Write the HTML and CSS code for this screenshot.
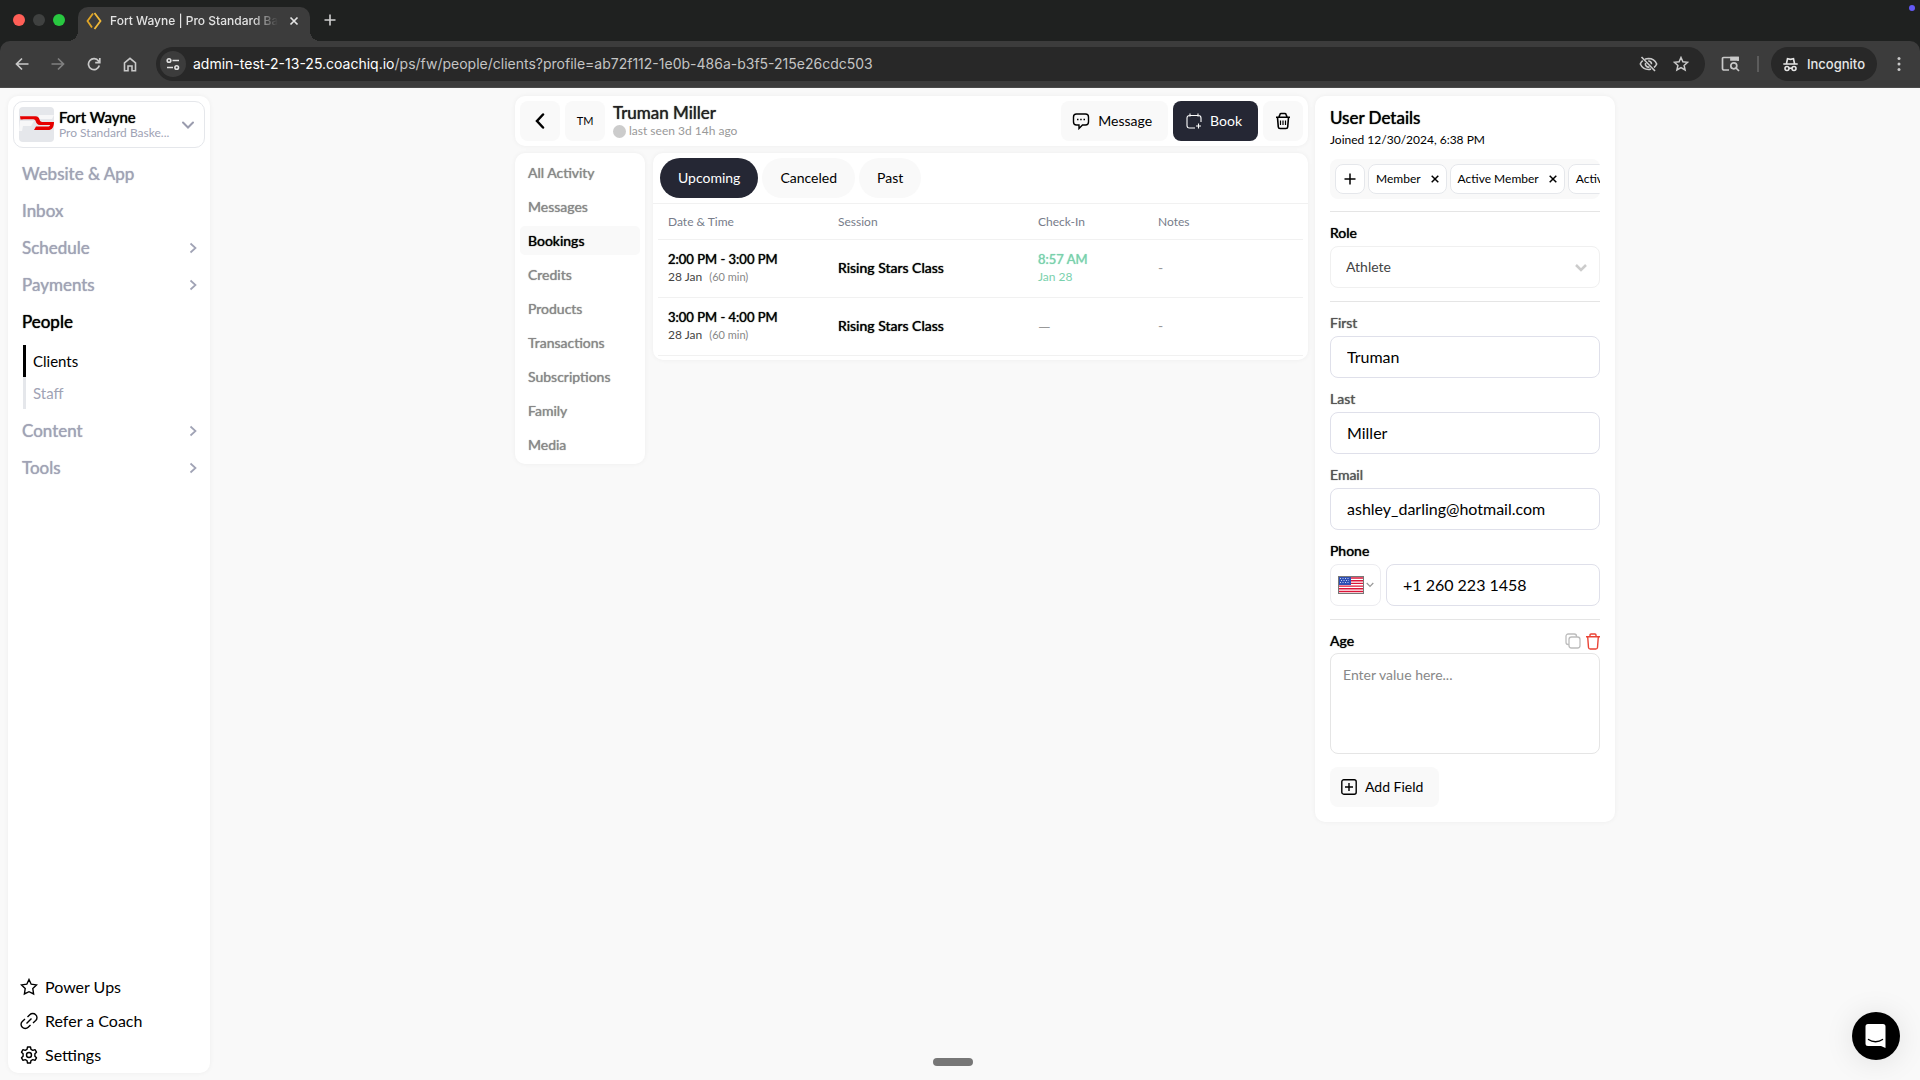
FILE: index.html
```html
<!DOCTYPE html>
<html lang="en">
<head>
<meta charset="utf-8">
<title>Fort Wayne | Pro Standard Basketball</title>
<link rel="stylesheet" href="styles.css">
</head>
<body>
<div class="browser">
  <div class="tabstrip">
    <div class="lights"><span class="light red"></span><span class="light off"></span><span class="light green"></span></div>
    <div class="tab">
      <svg width="16" height="18" viewBox="0 0 16 18" fill="none" stroke-width="1.800"><path d="M7 1.500 1.500 9 6 15.500" stroke="#e0a526"/><path d="M8.500 1 14.500 9 8.500 17" stroke="#f0b93a"/></svg>
      <span class="tab-title">Fort Wayne | Pro Standard Ba</span>
      <button class="plain" aria-label="Close tab"><svg width="10" height="10" viewBox="0 0 10 10" stroke="#e3e3e3" stroke-width="1.700"><path d="M1.500 1.500l7 7M8.500 1.500l-7 7"/></svg></button>
    </div>
    <button class="plain new-tab" aria-label="New tab"><svg width="12" height="12" viewBox="0 0 12 12" stroke="#d0d0d0" stroke-width="1.600"><path d="M6 .5v11M.5 6h11"/></svg></button>
    <span class="rec-dot"></span>
  </div>
  <div class="toolbar">
    <button class="plain tool" aria-label="Back"><svg width="14" height="14" viewBox="0 0 14 14" fill="none" stroke="#c9c9c9" stroke-width="1.700"><path d="M13.500 7H1.500M7 1.500 1.500 7 7 12.500"/></svg></button>
    <button class="plain tool" aria-label="Forward"><svg width="14" height="14" viewBox="0 0 14 14" fill="none" stroke="#808080" stroke-width="1.700"><path d="M.5 7h12M7 1.500 12.500 7 7 12.500"/></svg></button>
    <button class="plain tool" aria-label="Reload"><svg width="14" height="14" viewBox="0 0 14 14" fill="none" stroke="#c9c9c9" stroke-width="1.700"><path d="M12.300 8.500A5.500 5.500 0 1 1 11.500 4L12.700 5.500M12.800 1v4.700H8.200"/></svg></button>
    <button class="plain tool" aria-label="Home"><svg width="14" height="15" viewBox="0 0 14 15" fill="none" stroke="#c9c9c9" stroke-width="1.600"><path d="M1.500 5.800 7 1.300l5.500 4.500v8H9V9H5v4.800H1.500z"/></svg></button>
    <div class="omnibox">
      <span class="site-info"><svg width="14" height="14" viewBox="0 0 14 14" fill="none" stroke="#e0e0e0" stroke-width="1.600"><circle cx="3" cy="3.500" r="1.800"/><path d="M6.500 3.500H13M1 10.500h6"/><circle cx="10.700" cy="10.500" r="1.800"/></svg></span>
      <span class="url"><b>admin-test-2-13-25.coachiq.io</b>/ps/fw/people/clients?profile=ab72f112-1e0b-486a-b3f5-215e26cdc503</span>
      <button class="plain tool small" aria-label="Tracking protection"><svg width="19" height="16" viewBox="0 0 19 16" fill="none" stroke="#c9c9c9" stroke-width="1.600"><path d="M6 3.300A9 9 0 0 1 9.500 2.500c4 0 6.800 2.400 8.200 5.500a9 9 0 0 1-2.700 3.500M12 13a8 8 0 0 1-2.500.5C5.500 13.500 2.700 11 1.300 8A9 9 0 0 1 3.700 4.700"/><path d="M9.200 5a3 3 0 0 1 3.300 3.200M6.600 7a3 3 0 0 0 3.800 3.900M2.500 1l13.500 14"/></svg></button>
      <button class="plain tool small" aria-label="Bookmark"><svg width="16" height="16" viewBox="0 0 16 16" fill="none" stroke="#c9c9c9" stroke-width="1.500"><path d="m8 1.500 1.900 4.300 4.700.5-3.500 3.100 1 4.600L8 11.600 3.900 14l1-4.600L1.400 6.300l4.700-.5z"/></svg></button>
    </div>
    <button class="plain tool panel" aria-label="Side panel"><svg width="19" height="16" viewBox="0 0 19 16" fill="none" stroke="#c9c9c9" stroke-width="1.700"><path d="M8 14H3a1.500 1.500 0 0 1-1.500-1.500V2.500A1 1 0 0 1 2.500 1.500H17V5"/><path d="M10 1.500h7V4h-7z" fill="#c9c9c9"/><circle cx="12.800" cy="9.800" r="3"/><path d="M15 12l3 3"/></svg></button>
    <span class="divider"></span>
    <button class="incognito"><svg width="15" height="15" viewBox="0 0 15 15" fill="none" stroke="#e6e6e6" stroke-width="1.600"><path d="M.3 7h14.400M3.500 6.500 4.500 1.800 7.500 2.400l3-.6 1 4.700"/><circle cx="4" cy="11.500" r="2"/><circle cx="11" cy="11.500" r="2"/><path d="M6 11.200h3"/></svg>Incognito</button>
    <button class="plain tool more" aria-label="Menu"><svg width="4" height="16" viewBox="0 0 4 16" fill="#c9c9c9"><circle cx="2" cy="2.500" r="1.500"/><circle cx="2" cy="8" r="1.500"/><circle cx="2" cy="13.500" r="1.500"/></svg></button>
  </div>
</div>

<div class="app">
  <aside class="sidebar card">
    <button class="org">
      <svg class="org-logo" width="35" height="35" viewBox="0 0 35 35"><rect width="35" height="35" rx="4" fill="#e5e7eb"/><path d="M1 14h14l-3 5H4l-1 5H0zM20 8h15l-2 4H19z" fill="#f7f7f8"/><path d="M1 9.200h15.500c2.500 0 3.500 1.800 4 3.200.5 1.500 1 2.500 3 2.500h11.500c-.1 5.500-2 8-6 8H15l2-3.500h11.500c2 0 2.500-.6 2.700-1.500H21c-2.700 0-3.700-2-4.200-3.500-.4-1.200-1-2.200-2.500-2.200H4.500L3 12.500H1.500z" fill="#e60000"/></svg>
      <span class="org-text"><span class="org-name heavy">Fort Wayne</span><span class="org-sub">Pro Standard Baske...</span></span>
      <svg width="14" height="14" viewBox="0 0 14 14" fill="none" stroke="#9a9cae" stroke-width="2" stroke-linecap="round"><path d="M2 4.500l5 5 5-5"/></svg>
    </button>
    <nav class="menu">
      <a href="#" class="heavy">Website &amp; App</a>
      <a href="#" class="heavy">Inbox</a>
      <a href="#" class="heavy">Schedule<svg width="8" height="12" viewBox="0 0 8 12" class="chev"><path d="M1.500 1.500 6.500 6l-5 4.500"/></svg></a>
      <a href="#" class="heavy">Payments<svg width="8" height="12" viewBox="0 0 8 12" class="chev"><path d="M1.500 1.500 6.500 6l-5 4.500"/></svg></a>
      <a href="#" class="heavy current">People</a>
      <div class="submenu"><a href="#" class="on">Clients</a><a href="#">Staff</a></div>
      <a href="#" class="heavy">Content<svg width="8" height="12" viewBox="0 0 8 12" class="chev"><path d="M1.500 1.500 6.500 6l-5 4.500"/></svg></a>
      <a href="#" class="heavy">Tools<svg width="8" height="12" viewBox="0 0 8 12" class="chev"><path d="M1.500 1.500 6.500 6l-5 4.500"/></svg></a>
    </nav>
    <nav class="foot">
      <a href="#"><svg width="18" height="18" viewBox="0 0 18 18" class="line"><path d="m9 1.500 2.200 4.700 5.300.7-3.700 3.700.8 5.400L9 13.700 4.400 16l.8-5.400L1.500 6.900l5.300-.7z"/></svg>Power Ups</a>
      <a href="#"><svg width="18" height="18" viewBox="0 0 18 18" class="line"><path d="M6.500 11.500l5-5M7.500 5l2.300-2.300a4.100 4.100 0 0 1 5.900 0 4.100 4.100 0 0 1 0 5.900L13 11M10.500 13l-2.300 2.300a4.100 4.100 0 0 1-5.900 0 4.100 4.100 0 0 1 0-5.900L5 7"/></svg>Refer a Coach</a>
      <a href="#"><svg width="18" height="18" viewBox="0 0 18 18" class="line"><circle cx="9" cy="9" r="2.500"/><path d="M7.500 1h3l.5 2.300 1.800 1 2.200-.7 1.500 2.600-1.600 1.600v2.400l1.600 1.600-1.500 2.600-2.200-.7-1.800 1-.5 2.300h-3L7 14.700l-1.800-1-2.200.7-1.500-2.600 1.600-1.600V7.800L1.500 6.200 3 3.600l2.200.7 1.800-1z" stroke-linejoin="round"/></svg>Settings</a>
    </nav>
  </aside>

  <main class="main">
    <div class="profile">
      <div class="left">
        <header class="card head">
          <button class="soft square" aria-label="Back"><svg width="12" height="16" viewBox="0 0 12 16" fill="none" stroke="#000" stroke-width="2.500" stroke-linecap="round"><path d="M9 1.500 3 8l6 6.500"/></svg></button>
          <span class="soft square initials">TM</span>
          <div class="who"><h1 class="heavy">Truman Miller</h1><p><span class="status"></span>last seen 3d 14h ago</p></div>
          <button class="soft action"><svg width="18" height="18" viewBox="0 0 18 18" class="line"><path d="M4.500 2h9A3 3 0 0 1 16.500 5v5a3 3 0 0 1-3 3h-3L7 16.500V13H4.500a3 3 0 0 1-3-3V5a3 3 0 0 1 3-3z"/><path d="M5 7.500h1.500M8.200 7.500h1.500M11.500 7.500H13" stroke-width="1.600"/></svg>Message</button>
          <button class="soft action dark"><svg width="16" height="16" viewBox="0 0 16 16" class="line thin"><path d="M9 15H3.500A2.500 2.500 0 0 1 1 12.500V5a2.500 2.500 0 0 1 2.500-2.500h9A2.500 2.500 0 0 1 15 5v4M4 .5v3M12 .5v3M12.500 10.500v5M10 13h5"/></svg>Book</button>
          <button class="soft square" aria-label="Delete"><svg width="16" height="18" viewBox="0 0 16 18" fill="none" stroke="#000" stroke-width="1.600"><path d="M1 5.200h14M4 5 5 2.300c.2-.6.6-.8 1.200-.8h3.600c.6 0 1 .2 1.200.8L12 5M2.500 5.500l.8 9.500c.1 1 .7 1.500 1.700 1.500h6c1 0 1.600-.5 1.700-1.500l.8-9.500"/><path d="M5.500 8.500v4.500M8 8.500v4.500M10.500 8.500v4.500" stroke-width="1.200"/></svg></button>
        </header>
        <div class="columns">
          <nav class="card tabs">
            <a href="#" class="heavy">All Activity</a>
            <a href="#" class="heavy">Messages</a>
            <a href="#" class="heavy active">Bookings</a>
            <a href="#" class="heavy">Credits</a>
            <a href="#" class="heavy">Products</a>
            <a href="#" class="heavy">Transactions</a>
            <a href="#" class="heavy">Subscriptions</a>
            <a href="#" class="heavy">Family</a>
            <a href="#" class="heavy">Media</a>
          </nav>
          <section class="card bookings">
            <div class="filters"><button class="pill selected">Upcoming</button><button class="pill">Canceled</button><button class="pill">Past</button></div>
            <table>
              <colgroup><col class="c-date"><col class="c-session"><col class="c-check"><col></colgroup>
              <thead><tr><th>Date &amp; Time</th><th>Session</th><th>Check-In</th><th>Notes</th></tr></thead>
              <tbody>
                <tr><td><div class="time heavy">2:00 PM - 3:00 PM</div><div class="sub">28 Jan <small>(60 min)</small></div></td><td><span class="heavy">Rising Stars Class</span></td><td class="checked-in"><div class="time heavy">8:57 AM</div><div class="sub">Jan 28</div></td><td class="muted">-</td></tr>
                <tr><td><div class="time heavy">3:00 PM - 4:00 PM</div><div class="sub">28 Jan <small>(60 min)</small></div></td><td><span class="heavy">Rising Stars Class</span></td><td class="muted dash">—</td><td class="muted">-</td></tr>
              </tbody>
            </table>
          </section>
        </div>
      </div>

      <aside class="card details">
        <h2 class="heavy">User Details</h2>
        <p class="joined">Joined 12/30/2024, 6:38 PM</p>
        <div class="chips">
          <button class="chip add" aria-label="Add tag"><svg width="12" height="12" viewBox="0 0 12 12" stroke="#000" stroke-width="1.500"><path d="M6 .5v11M.5 6h11"/></svg></button>
          <button class="chip">Member<svg width="8" height="8" viewBox="0 0 8 8" class="x"><path d="M.7.7l6.600 6.600M7.300.7.7 7.300"/></svg></button>
          <button class="chip">Active Member<svg width="8" height="8" viewBox="0 0 8 8" class="x"><path d="M.7.7l6.600 6.600M7.300.7.7 7.300"/></svg></button>
          <button class="chip">Activ</button>
        </div>
        <hr>
        <label class="heavy" for="role">Role</label>
        <div class="select"><select id="role"><option>Athlete</option></select><svg width="14" height="10" viewBox="0 0 14 10" fill="none" stroke="#ccc" stroke-width="2.500"><path d="M2 2l5 5 5-5"/></svg></div>
        <hr>
        <label class="heavy grey" for="first">First</label>
        <input id="first" type="text" value="Truman">
        <label class="heavy grey next" for="last">Last</label>
        <input id="last" type="text" value="Miller">
        <label class="heavy grey next" for="email">Email</label>
        <input id="email" type="email" value="ashley_darling@hotmail.com">
        <label class="heavy next" for="phone">Phone</label>
        <div class="phone">
          <button class="country" aria-label="Country: United States"><svg width="26" height="18" viewBox="0 0 26 18"><rect width="26" height="18" fill="#fff"/><path d="M0 2h26M0 4.700h26M0 7.400h26M0 10.100h26M0 12.800h26M0 15.500h26" stroke="#dc1438" stroke-width="1.400"/><rect width="13" height="9" fill="#2f50b5"/><path d="M2 2.500h10M3 4.500h8M2 6.500h10" stroke="#c5d0f0" stroke-dasharray="1 1.500"/><rect x=".5" y=".5" width="25" height="17" fill="none" stroke="#777"/></svg><svg width="8" height="6" viewBox="0 0 8 6" fill="none" stroke="#999" stroke-width="1.200"><path d="M.7 1 4 4.500 7.300 1"/></svg></button>
          <input id="phone" type="tel" value="+1 260 223 1458">
        </div>
        <hr>
        <div class="field-head">
          <label class="heavy" for="age">Age</label>
          <button class="plain" aria-label="Duplicate field"><svg width="16" height="16" viewBox="0 0 16 16" fill="none" stroke="#bdbdbd" stroke-width="1.300"><rect x="4" y="4" width="11" height="11" rx="2.500"/><path d="M4 11.500H3.200A2.200 2.200 0 0 1 1 9.300V3.200A2.200 2.200 0 0 1 3.200 1h6.100a2.200 2.200 0 0 1 2.200 2.200V4"/></svg></button>
          <button class="plain" aria-label="Delete field"><svg width="14" height="17" viewBox="0 0 14 17" fill="none" stroke="#ea4335" stroke-width="1.400"><path d="M0 3.700h14M4 3.500V2c0-.7.400-1 1-1h4c.6 0 1 .3 1 1v1.500M1.700 4l.8 10.500c.1 1 .7 1.500 1.700 1.500h5.600c1 0 1.600-.5 1.700-1.500L12.300 4"/></svg></button>
        </div>
        <textarea id="age" placeholder="Enter value here..."></textarea>
        <button class="soft action add-field"><svg width="16" height="16" viewBox="0 0 16 16" class="line"><rect x=".8" y=".8" width="14.400" height="14.400" rx="2"/><path d="M8 4v8M4 8h8"/></svg>Add Field</button>
      </aside>
    </div>
  </main>
</div>
<span class="grabber"></span>
<button class="chat" aria-label="Open chat"><svg width="24" height="26" viewBox="0 0 24 26"><path d="M4 1h15a2.500 2.500 0 0 1 2.500 2.500V25l-4.500-2H4a2.500 2.500 0 0 1-2.500-2.500v-17A2.500 2.500 0 0 1 4 1z" fill="#fff"/><path d="M4.500 16.500c4 3 10 3 14 0" fill="none" stroke="#000" stroke-width="1.400" stroke-linecap="round"/></svg></button>
</body>
</html>
```
FILE: styles.css
```css
* { box-sizing: border-box; }
body {
  margin: 0;
  min-height: 100vh;
  display: flex;
  flex-direction: column;
  background: #f9f9f9;
  color: #000;
  font: 14px/20px Lato, sans-serif;
}
a { color: inherit; text-decoration: none; }
button, input, select, textarea { font: inherit; color: inherit; margin: 0; }
button { border: 0; cursor: pointer; white-space: nowrap; }
h1, h2, p { margin: 0; font-weight: 400; }
svg { display: block; flex: none; }
.heavy { text-shadow: 0 0 1px currentColor; }
.plain { padding: 0; background: none; display: flex; align-items: center; justify-content: center; }
.line { fill: none; stroke: currentColor; stroke-width: 1.400; }
.thin { stroke-width: 1.100; }

/* browser window */
.browser { background: #1f2120; font-family: Inter, sans-serif; color: #e3e3e3; }
.tabstrip { display: flex; align-items: flex-end; height: 41px; position: relative; }
.lights { display: flex; gap: 8px; padding: 0 13px 15px 13px; }
.light { flex: none; width: 12px; height: 12px; border-radius: 50%; }
.light.red { background: #ff5f57; }
.light.off { background: #3f4140; }
.light.green { background: #28c840; }
.tab {
  width: 232px;
  height: 34px;
  padding: 0 8px 7px 8px;
  display: flex;
  align-items: center;
  gap: 8px;
  background: #3c3c3c;
  border-radius: 10px 10px 0 0;
  position: relative;
}
.tab::before, .tab::after { content: ""; position: absolute; bottom: 0; width: 10px; height: 10px; }
.tab::before { right: 100%; background: radial-gradient(circle at 0 0, transparent 10px, #3c3c3c 10px); }
.tab::after { left: 100%; background: radial-gradient(circle at 100% 0, transparent 10px, #3c3c3c 10px); }
.tab-title {
  flex: 1;
  min-width: 0;
  white-space: nowrap;
  font-size: 12px;
  font-weight: 500;
  line-height: 18px;
  -webkit-mask-image: linear-gradient(90deg, #000 85%, transparent);
  mask-image: linear-gradient(90deg, #000 85%, transparent);
}
.tab button { width: 16px; height: 16px; }
.new-tab { width: 12px; height: 12px; margin: 0 0 15px 14px; }
.rec-dot { position: absolute; top: 5px; right: 5px; width: 6px; height: 6px; border-radius: 50%; background: #6459f5; }
.toolbar {
  display: flex;
  align-items: center;
  height: 47px;
  padding: 0 3px 0 4px;
  background: #3c3c3c;
  border-bottom: 1px solid #4a4a4a;
  border-radius: 10px 10px 0 0;
}
.tool { width: 36px; height: 34px; }
.omnibox { flex: 1; display: flex; align-items: center; height: 34px; margin-left: 8px; padding: 0 8px 0 4px; background: #282828; border-radius: 17px; }
.site-info { width: 26px; height: 26px; border-radius: 50%; background: #3c3c3c; display: grid; place-items: center; }
.url { flex: 1; min-width: 0; padding-left: 7px; overflow: hidden; white-space: nowrap; font-size: 14px; color: #c4c4c4; }
.url b { font-weight: 400; color: #fff; }
.small { width: 32px; }
.panel { margin-left: 8px; }
.divider { width: 2px; height: 16px; margin: 0 12px 0 8px; background: #5c5c5c; }
.incognito { display: flex; align-items: center; gap: 9px; height: 34px; padding: 0 12px; border-radius: 17px; background: #282828; color: #e6e6e6; font-size: 13px; font-weight: 500; }
.more { margin-left: 4px; }

/* app shell */
.app { flex: 1; display: flex; padding: 8px 0 7px 8px; }
.card { background: #fff; border-radius: 10px; box-shadow: 0 0 5px rgba(0, 0, 0, .05); }
.sidebar { flex: none; width: 202px; padding: 5px 5px 1px; display: flex; flex-direction: column; }
.org { display: flex; align-items: center; gap: 5px; height: 47px; padding: 0 9px 0 5px; background: #fff; border: 1px solid #e5e7eb; border-radius: 10px; text-align: left; }
.org-text { flex: 1; min-width: 0; display: flex; flex-direction: column; }
.org-name { font-size: 15px; line-height: 16px; }
.org-sub { font-size: 12px; line-height: 16px; color: #a0a3b5; }
.menu { display: flex; flex-direction: column; padding: 7px 8px 0 9px; color: #a0a3b5; }
.menu > a { display: flex; align-items: center; justify-content: space-between; height: 37px; font-size: 17px; }
.menu .current, .menu .on { color: #000; }
.chev { fill: none; stroke: #a0a3b5; stroke-width: 1.700; }
.submenu { display: flex; flex-direction: column; padding: 5px 0 3px 1px; }
.submenu a { height: 32px; padding-left: 7px; border-left: 3px solid #e5e7eb; font-size: 15px; line-height: 32px; }
.submenu .on { border-color: #000; }
.foot { margin-top: auto; padding: 0 7px; }
.foot a { display: flex; align-items: center; gap: 7px; height: 34px; font-size: 16px; }
.main { flex: 1; min-width: 0; }
.profile { display: flex; align-items: flex-start; gap: 7px; max-width: 1100px; margin: 0 auto; }
.left { flex: 1; min-width: 0; display: flex; flex-direction: column; gap: 7px; }

/* profile header */
.head { display: flex; align-items: center; gap: 5px; padding: 5px; }
.soft { background: #f9f9f9; border-radius: 8px; height: 40px; display: flex; align-items: center; justify-content: center; }
.square { width: 40px; padding: 0; }
.initials { font-size: 11px; }
.who { flex: 1; padding-left: 3px; }
.who h1 { font-size: 17px; line-height: 20px; color: #222; }
.who p { display: flex; align-items: center; gap: 3px; font-size: 12px; line-height: 16px; color: #999; }
.status { width: 13px; height: 13px; border-radius: 50%; background: #ccc; }
.action { gap: 8px; padding: 0 16px 0 11px; }
.dark { background: #252734; color: #fff; padding: 0 16px 0 13px; }

.columns { display: flex; align-items: flex-start; gap: 8px; }
.tabs { flex: none; width: 130px; display: flex; flex-direction: column; gap: 5px; padding: 5px; color: #888; }
.tabs a { height: 29px; padding: 0 8px; line-height: 29px; border-radius: 5px; }
.tabs .active { color: #000; background: #f9f9f9; }

/* bookings table */
.bookings { flex: 1; min-width: 0; padding-bottom: 4px; }
.filters { display: flex; gap: 4px; padding: 5px 7px; border-bottom: 1px solid #f1f1f1; }
.pill { height: 40px; padding: 0 18px; border-radius: 20px; background: #f9f9f9; }
.selected { background: #252734; color: #fff; }
table { width: calc(100% - 10px); margin: 0 5px; border-collapse: collapse; table-layout: fixed; }
.c-date { width: 170px; }
.c-session { width: 200px; }
.c-check { width: 120px; }
th, td { padding: 0 10px; text-align: left; border-bottom: 1px solid #f1f1f1; }
th { height: 35px; padding-top: 2px; font-size: 12px; font-weight: 400; color: #777c8a; }
td { height: 58px; line-height: 18px; }
.time { font-size: 13px; }
.sub { font-size: 12px; color: #444; }
.sub small { margin-left: 4px; font-size: 11px; color: #888; }
.checked-in, .checked-in .sub { color: #7ad1ad; }
.muted { color: #999; }
.dash { font-size: 16px; }

/* details */
.details { flex: none; width: 300px; padding: 12px 15px 15px; display: flex; flex-direction: column; }
.details h2 { font-size: 17px; line-height: 20px; }
.joined { font-size: 12px; line-height: 24px; }
.chips { display: flex; gap: 3px; height: 40px; margin-top: 7px; padding: 5px; overflow: hidden; background: #f9f9f9; border-radius: 8px; }
.chip { flex: none; display: flex; align-items: center; gap: 10px; height: 30px; padding: 0 7px; border: 1px solid #e5e7eb; border-radius: 8px; background: #fff; font-size: 12px; }
.add { width: 30px; padding: 0; justify-content: center; }
.x { stroke: #000; stroke-width: 1.500; }
hr { width: 100%; height: 1px; margin: 13px 0 11px; border: 0; background: #e5e5e5; }
.chips + hr { margin-top: 12px; }
.details label { line-height: 20px; margin-bottom: 3px; }
.details .grey { color: #555; }
.details .next { margin-top: 11px; }
.select { position: relative; }
.select svg { position: absolute; right: 12px; top: 17px; }
select { appearance: none; display: block; width: 100%; height: 42px; padding: 0 15px; background: #fff; border: 1px solid #f0f0f0; border-radius: 8px; color: #444; }
input, textarea { width: 100%; border: 1px solid #dfe0ea; border-radius: 8px; background: #fff; outline: 0; }
input { height: 42px; padding: 0 16px 2px; font-size: 16px; }
.phone { display: flex; gap: 5px; }
.phone input { flex: 1; min-width: 0; }
.country { width: 51px; height: 42px; padding: 0 6px 0 7px; display: flex; align-items: center; justify-content: space-between; background: #fff; border: 1px solid #ececf0; border-radius: 8px; }
.field-head { display: flex; align-items: center; gap: 5px; margin-bottom: 2px; }
.field-head label { flex: 1; margin: 0; }
textarea { display: block; height: 101px; padding: 11px 12px; resize: none; border-color: #e5e5e5; }
textarea::placeholder { color: #888; }
.add-field { align-self: flex-start; margin-top: 13px; }

/* floating controls */
.chat { position: fixed; right: 20px; bottom: 20px; width: 48px; height: 48px; padding: 0; display: grid; place-items: center; border-radius: 50%; background: #000; box-shadow: 0 2px 30px rgba(0, 0, 0, .1); }
.grabber { position: fixed; left: 933px; bottom: 14px; width: 40px; height: 8px; border-radius: 4px; background: #777; }
```
